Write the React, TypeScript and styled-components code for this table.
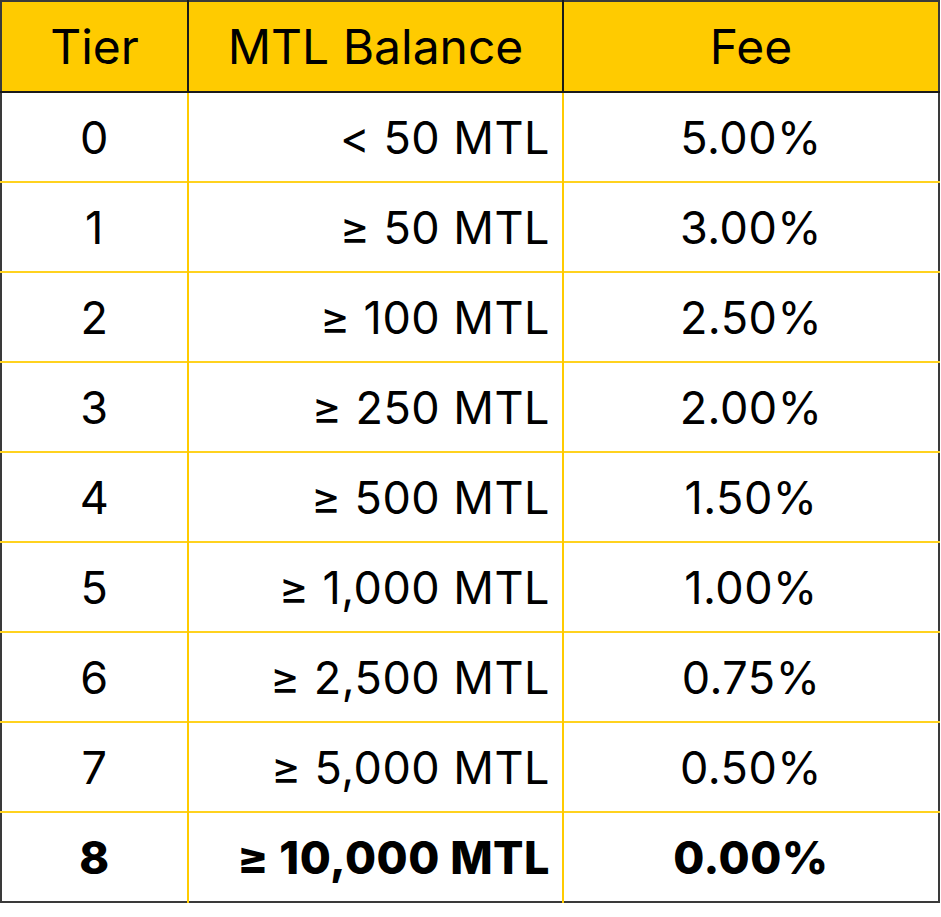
import styled, { createGlobalStyle } from 'styled-components';

const GlobalStyle = createGlobalStyle`
  body {
    margin: 0;
    background: #ffffff;
    font-family: Inter, "Noto Sans", sans-serif;
    color: #000000;
  }
`;

const Table = styled.table`
  width: 940px;
  border-collapse: collapse;
  border: 2px solid #3a3a3a;
  table-layout: fixed;
`;

const HeadCell = styled.th<{ $width?: number }>`
  width: ${(p) => (p.$width ? `${p.$width}px` : 'auto')};
  height: 89px;
  padding: 0;
  background: #ffcb00;
  border-left: 2px solid #1a1a1a;
  border-bottom: 2px solid #1a1a1a;
  font-size: 48px;
  font-weight: 400;
  text-align: center;

  &:first-child {
    border-left: none;
  }
`;

const Row = styled.tr`
  & + & td {
    border-top: 2px solid #ffd21f;
  }
`;

const Cell = styled.td<{ $align?: 'center' | 'right'; $bold?: boolean }>`
  height: 88px;
  padding: 0 ${(p) => (p.$align === 'right' ? '12px' : '0')} 0 0;
  border-left: 2px solid #ffcb00;
  font-size: 45px;
  font-weight: ${(p) => (p.$bold ? 800 : 400)};
  text-align: ${(p) => p.$align || 'center'};
  letter-spacing: 0.5px;

  &:first-child {
    border-left: none;
  }
`;

const tiers = [
  { tier: '0', balance: '< 50 MTL', fee: '5.00%' },
  { tier: '1', balance: '≥ 50 MTL', fee: '3.00%' },
  { tier: '2', balance: '≥ 100 MTL', fee: '2.50%' },
  { tier: '3', balance: '≥ 250 MTL', fee: '2.00%' },
  { tier: '4', balance: '≥ 500 MTL', fee: '1.50%' },
  { tier: '5', balance: '≥ 1,000 MTL', fee: '1.00%' },
  { tier: '6', balance: '≥ 2,500 MTL', fee: '0.75%' },
  { tier: '7', balance: '≥ 5,000 MTL', fee: '0.50%' },
  { tier: '8', balance: '≥ 10,000 MTL', fee: '0.00%' },
];

export default function App() {
  return (
    <>
      <GlobalStyle />
      <Table>
        <thead>
          <tr>
            <HeadCell $width={185}>Tier</HeadCell>
            <HeadCell $width={373}>MTL Balance</HeadCell>
            <HeadCell>Fee</HeadCell>
          </tr>
        </thead>
        <tbody>
          {tiers.map((t, i) => {
            const last = i === tiers.length - 1;
            return (
              <Row key={t.tier}>
                <Cell $bold={last}>{t.tier}</Cell>
                <Cell $align="right" $bold={last}>
                  {t.balance}
                </Cell>
                <Cell $bold={last}>{t.fee}</Cell>
              </Row>
            );
          })}
        </tbody>
      </Table>
    </>
  );
}
